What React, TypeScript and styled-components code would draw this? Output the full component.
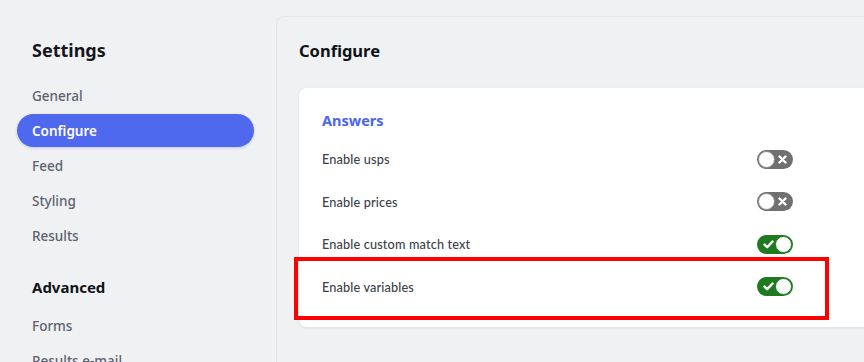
import React from "react";
import styled, { createGlobalStyle } from "styled-components";

const Global = createGlobalStyle`
  html, body { margin: 0; padding: 0; background: #f0f1f3; }
  body { font-family: "Noto Sans", "Open Sans", sans-serif; overflow: hidden; }
  * { box-sizing: border-box; }
`;

const Page = styled.div`
  display: flex;
  width: 864px;
  height: 362px;
  background: #f0f1f3;
  overflow: hidden;
`;

const Sidebar = styled.nav`
  width: 276px;
  flex: none;
  padding: 36px 22px 0 17px;
  display: flex;
  flex-direction: column;
`;

const SideTitle = styled.h2`
  margin: 0 0 15px 15px;
  font-size: 18px;
  font-weight: 700;
  color: #14161c;
  line-height: 28px;
`;

const NavList = styled.div`
  display: flex;
  flex-direction: column;
  gap: 2px;
`;

const SectionTitle = styled.h3`
  margin: 21px 0 8px 15px;
  font-size: 15px;
  font-weight: 700;
  color: #111318;
  line-height: 28px;
`;

const NavItem = styled.div<{ $active?: boolean }>`
  height: 33px;
  flex: none;
  padding: 0 15px;
  display: flex;
  align-items: center;
  border-radius: 17px;
  font-size: 13.5px;
  font-weight: ${(p) => (p.$active ? 600 : 500)};
  color: ${(p) => (p.$active ? "#ffffff" : "#5c6170")};
  background: ${(p) => (p.$active ? "#4e68ee" : "transparent")};
  box-shadow: ${(p) => (p.$active ? "0 1px 3px rgba(60,80,200,0.25)" : "none")};
`;

const Main = styled.main`
  flex: 1;
  margin-top: 16px;
  border-top: 1px solid #e4e6ea;
  border-left: 1px solid #e4e6ea;
  border-top-left-radius: 8px;
  background: #f0f1f3;
  padding: 22px 0 0 22px;
  display: flex;
  flex-direction: column;
`;

const MainTitle = styled.h1`
  margin: 0 0 25px 0;
  font-size: 16.5px;
  font-weight: 700;
  color: #0f1115;
  line-height: 24px;
`;

const Card = styled.section`
  position: relative;
  background: #ffffff;
  border-radius: 8px 0 0 8px;
  box-shadow: 0 1px 3px rgba(0, 0, 0, 0.08);
  padding: 21px 0 19px 23px;
  width: 580px;
`;

const CardTitle = styled.h4`
  margin: 0 0 7px 0;
  font-size: 14.5px;
  font-weight: 700;
  color: #4a64ee;
  line-height: 22px;
`;

const Row = styled.div`
  display: flex;
  align-items: center;
  justify-content: space-between;
  height: 42.5px;
  padding-right: 86px;
`;

const RowLabel = styled.span`
  font-family: Lato, "Noto Sans", sans-serif;
  font-size: 12.7px;
  font-weight: 500;
  letter-spacing: 0.15px;
  color: #3b3f4a;
`;

const Track = styled.div<{ $on: boolean }>`
  position: relative;
  width: 36px;
  height: 19px;
  border-radius: 10px;
  background: ${(p) => (p.$on ? "#1f7a1f" : "#707070")};
  display: flex;
  align-items: center;
  justify-content: ${(p) => (p.$on ? "flex-start" : "flex-end")};
  padding: 0 6px;
`;

const Knob = styled.div<{ $on: boolean }>`
  position: absolute;
  top: 1px;
  ${(p) => (p.$on ? "right: 1px;" : "left: 1px;")}
  width: 17px;
  height: 17px;
  border-radius: 50%;
  background: #fff;
  border: 1px solid ${(p) => (p.$on ? "#1f7a1f" : "#8a8a8a")};
`;

const Highlight = styled.div`
  position: absolute;
  left: -5px;
  top: 169px;
  width: 535px;
  height: 63px;
  border: 4px solid #ff0000;
  pointer-events: none;
`;

const Toggle = ({ on }: { on: boolean }) => (
  <Track $on={on}>
    {on ? (
      <svg width="11" height="9" viewBox="0 0 11 9">
        <path d="M1.5 4.6 L4.2 7.2 L9.5 1.6" fill="none" stroke="#fff" strokeWidth="2.4" strokeLinecap="round" strokeLinejoin="round" />
      </svg>
    ) : (
      <svg width="9" height="9" viewBox="0 0 9 9">
        <path d="M1.5 1.5 L7.5 7.5 M7.5 1.5 L1.5 7.5" fill="none" stroke="#fff" strokeWidth="2.4" strokeLinecap="round" />
      </svg>
    )}
    <Knob $on={on} />
  </Track>
);

const rows = [
  { label: "Enable usps", on: false },
  { label: "Enable prices", on: false },
  { label: "Enable custom match text", on: true },
  { label: "Enable variables", on: true },
];

export default function App() {
  return (
    <Page>
      <Global />
      <Sidebar>
        <SideTitle>Settings</SideTitle>
        <NavList>
          <NavItem>General</NavItem>
          <NavItem $active>Configure</NavItem>
          <NavItem>Feed</NavItem>
          <NavItem>Styling</NavItem>
          <NavItem>Results</NavItem>
        </NavList>
        <SectionTitle>Advanced</SectionTitle>
        <NavList>
          <NavItem>Forms</NavItem>
          <NavItem>Results e-mail</NavItem>
        </NavList>
      </Sidebar>
      <Main>
        <MainTitle>Configure</MainTitle>
        <Card>
          <CardTitle>Answers</CardTitle>
          {rows.map((r) => (
            <Row key={r.label}>
              <RowLabel>{r.label}</RowLabel>
              <Toggle on={r.on} />
            </Row>
          ))}
          <Highlight />
        </Card>
      </Main>
    </Page>
  );
}
